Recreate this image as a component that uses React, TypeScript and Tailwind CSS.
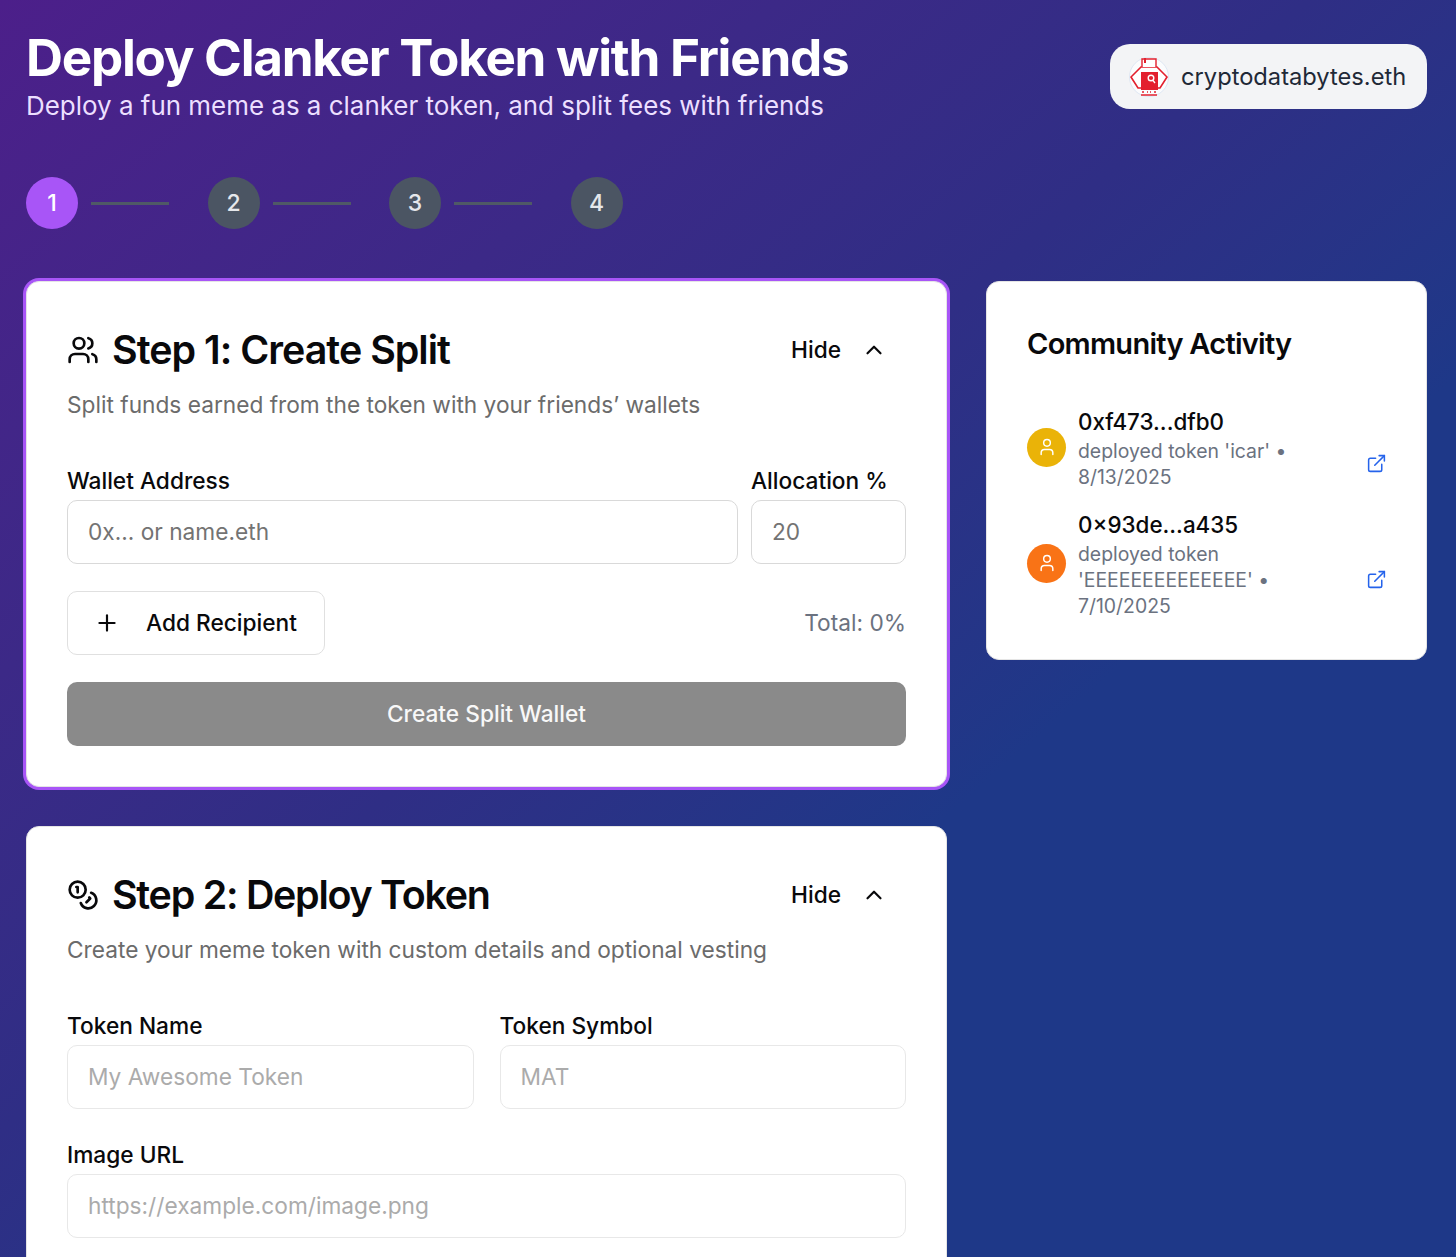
import { ChevronUp, Coins, ExternalLink, Plus, User, Users } from 'lucide-react';

function Logo() {
  return (
    <svg width="40" height="40" viewBox="0 0 40 40" className="shrink-0">
      <circle cx="20" cy="20" r="19.5" fill="#fbfcfd" stroke="#cfdcf0" strokeWidth="0.6" />
      <path d="M12 10h16l10 10-7 11H9L2 20z" fill="#fff" stroke="#e3202e" strokeWidth="1.6" />
      <path d="M13 10V2h14v8" fill="#fff" stroke="#e3202e" strokeWidth="1.4" />
      <rect x="15" y="1" width="2" height="5" fill="#e3202e" />
      <rect x="12" y="15" width="17" height="18" fill="#e3202e" />
      <circle cx="22" cy="21" r="2.8" fill="none" stroke="#fff" strokeWidth="1.4" />
      <path d="M24 23.5l2 2.5" stroke="#fff" strokeWidth="1.3" />
      <path d="M13 35h2M18 35h1M21 35h1M25 35h2M12 38h16" stroke="#e3202e" strokeWidth="1.4" />
    </svg>
  );
}

function StepCircle({ n, active, line }: { n: number; active?: boolean; line?: boolean }) {
  return (
    <div className="flex items-center">
      <div
        className={`flex h-[52px] w-[52px] items-center justify-center rounded-full text-[23px] font-medium ${
          active ? 'bg-[#a855f7] text-white' : 'bg-[#4b5563] text-[#e5e7eb]'
        }`}
      >
        {n}
      </div>
      {line && <div className="mr-[38.5px] ml-[13px] h-[3px] w-[78px] bg-[#4f5966]" />}
    </div>
  );
}

function CardHeader({
  icon,
  title,
  desc,
  titleClass,
}: {
  icon: React.ReactNode;
  title: string;
  desc: string;
  titleClass: string;
}) {
  return (
    <>
      <div className="flex items-center justify-between">
        <div className="flex items-center gap-[13px]">
          {icon}
          <h2 className={`text-[39.4px] leading-[52px] font-semibold text-[#09090b] ${titleClass}`}>{title}</h2>
        </div>
        <button className="flex h-[52px] items-center gap-[20px] pr-[19px] text-[22.7px] font-medium text-[#09090b]">
          Hide
          <ChevronUp size={26} strokeWidth={2} />
        </button>
      </div>
      <p className="mt-[16px] text-[22.7px] leading-[26px] text-[#6b6b6b]">{desc}</p>
    </>
  );
}

function Field({
  label,
  placeholder,
  className,
  strong,
}: {
  label: string;
  placeholder: string;
  className?: string;
  strong?: boolean;
}) {
  return (
    <div className={className}>
      <div className="text-[22.7px] leading-[26px] font-medium text-[#09090b]">{label}</div>
      <div
        className={`mt-[6px] flex h-[64px] items-center rounded-[10px] border-[1.5px] px-5 text-[22.7px] ${
          strong ? 'border-[#d9d9d9] text-[#737373]' : 'border-[#e8e8e8] text-[#ababab]'
        }`}
      >
        {placeholder}
      </div>
    </div>
  );
}

function Activity({ color, address, lines }: { color: string; address: string; lines: string[] }) {
  return (
    <div className="flex items-center">
      <div className={`mb-[5px] flex h-[39px] w-[39px] shrink-0 items-center justify-center rounded-full text-white ${color}`}>
        <User size={20} strokeWidth={1.75} />
      </div>
      <div className="ml-[12px] flex-1">
        <div className="text-[22.4px] leading-[26px] font-medium text-[#09090b]">{address}</div>
        <div className="mt-[3px] text-[19.4px] leading-[26px] text-[#6b7280]">
          {lines.map((l) => (
            <div key={l}>{l}</div>
          ))}
        </div>
      </div>
      <ExternalLink size={21} strokeWidth={1.75} className="mt-[28px] -mr-[1px] text-[#2563eb]" />
    </div>
  );
}

export default function App() {
  return (
    <div className="h-[1257px] overflow-hidden bg-gradient-to-br from-[#4c1f8a] via-[#2f2e85] via-45% to-[#1e3888] to-65% pt-[26px] pr-[29px] pl-[26px] font-['Inter',sans-serif] antialiased">
      <header className="flex items-start justify-between">
        <div>
          <h1 className="text-[51.2px] leading-[62px] font-bold tracking-[-0.025em] text-white">
            Deploy Clanker Token with Friends
          </h1>
          <p className="mt-[2px] text-[25.95px] leading-[32px] text-[#ecdfff]">
            Deploy a fun meme as a clanker token, and split fees with friends
          </p>
        </div>
        <div className="mt-[18px] flex h-[65px] w-[317px] items-center gap-3 rounded-[20px] bg-[#f3f4f6] pl-[19px] text-[23.7px] font-normal text-[#1f2937]">
          <Logo />
          cryptodatabytes.eth
        </div>
      </header>

      <div className="mt-[55px] flex items-center gap-0">
        <StepCircle n={1} active line />
        <StepCircle n={2} line />
        <StepCircle n={3} line />
        <StepCircle n={4} />
      </div>

      <div className="mt-[52px] flex items-start gap-[39px]">
        <main className="flex w-[921px] shrink-0 flex-col gap-[39px]">
          <section className="rounded-[13px] border border-[#e5e5e5] bg-white pt-[42px] pr-[40px] pb-10 pl-10 shadow-[0_0_0_3px_#a855f7]">
            <CardHeader
              icon={<Users size={32} strokeWidth={2} className="text-[#09090b]" />}
              title="Step 1: Create Split"
              titleClass="tracking-[-0.025em]"
              desc="Split funds earned from the token with your friends’ wallets"
            />
            <div className="mt-[50px] flex gap-[13px]">
              <Field label="Wallet Address" placeholder="0x... or name.eth" className="flex-1" strong />
              <Field label="Allocation %" placeholder="20" className="w-[155px]" strong />
            </div>
            <div className="mt-[27px] flex items-center justify-between">
              <button className="flex h-[64px] w-[258px] items-center rounded-[10px] border-[1.5px] border-[#e0e0e0] pl-[26px] text-[22.7px] font-medium text-[#09090b]">
                <Plus size={26} strokeWidth={2} />
                <span className="ml-[26px]">Add Recipient</span>
              </button>
              <span className="text-[22.7px] text-[#6b7280]">Total: 0%</span>
            </div>
            <button className="mt-[27px] h-[64px] w-full rounded-[10px] bg-[#8a8a8a] text-[22.7px] font-medium text-[#f8f8f8]">
              Create Split Wallet
            </button>
          </section>

          <section className="rounded-[13px] border border-[#e5e5e5] bg-white pt-[42px] pr-[40px] pb-10 pl-10">
            <CardHeader
              icon={<Coins size={32} strokeWidth={2} className="text-[#09090b]" />}
              title="Step 2: Deploy Token"
              titleClass="tracking-[-0.032em]"
              desc="Create your meme token with custom details and optional vesting"
            />
            <div className="mt-[50px] grid grid-cols-2 gap-[26px]">
              <Field label="Token Name" placeholder="My Awesome Token" />
              <Field label="Token Symbol" placeholder="MAT" />
            </div>
            <Field label="Image URL" placeholder="https://example.com/image.png" className="mt-[33px]" />
          </section>
        </main>

        <aside className="flex-1 rounded-[13px] border border-[#e5e5e5] bg-white px-10 pt-[45px] pb-[40px]">
          <h3 className="text-[29px] leading-[34px] font-semibold tracking-[-0.025em] text-[#09090b]">
            Community Activity
          </h3>
          <div className="mt-[48px] flex flex-col gap-[22px]">
            <Activity
              color="bg-[#eab308]"
              address="0xf473...dfb0"
              lines={["deployed token 'icar' •", '8/13/2025']}
            />
            <Activity
              color="bg-[#f97316]"
              address="0×93de...a435"
              lines={['deployed token', "'EEEEEEEEEEEEEE' •", '7/10/2025']}
            />
          </div>
        </aside>
      </div>
    </div>
  );
}
